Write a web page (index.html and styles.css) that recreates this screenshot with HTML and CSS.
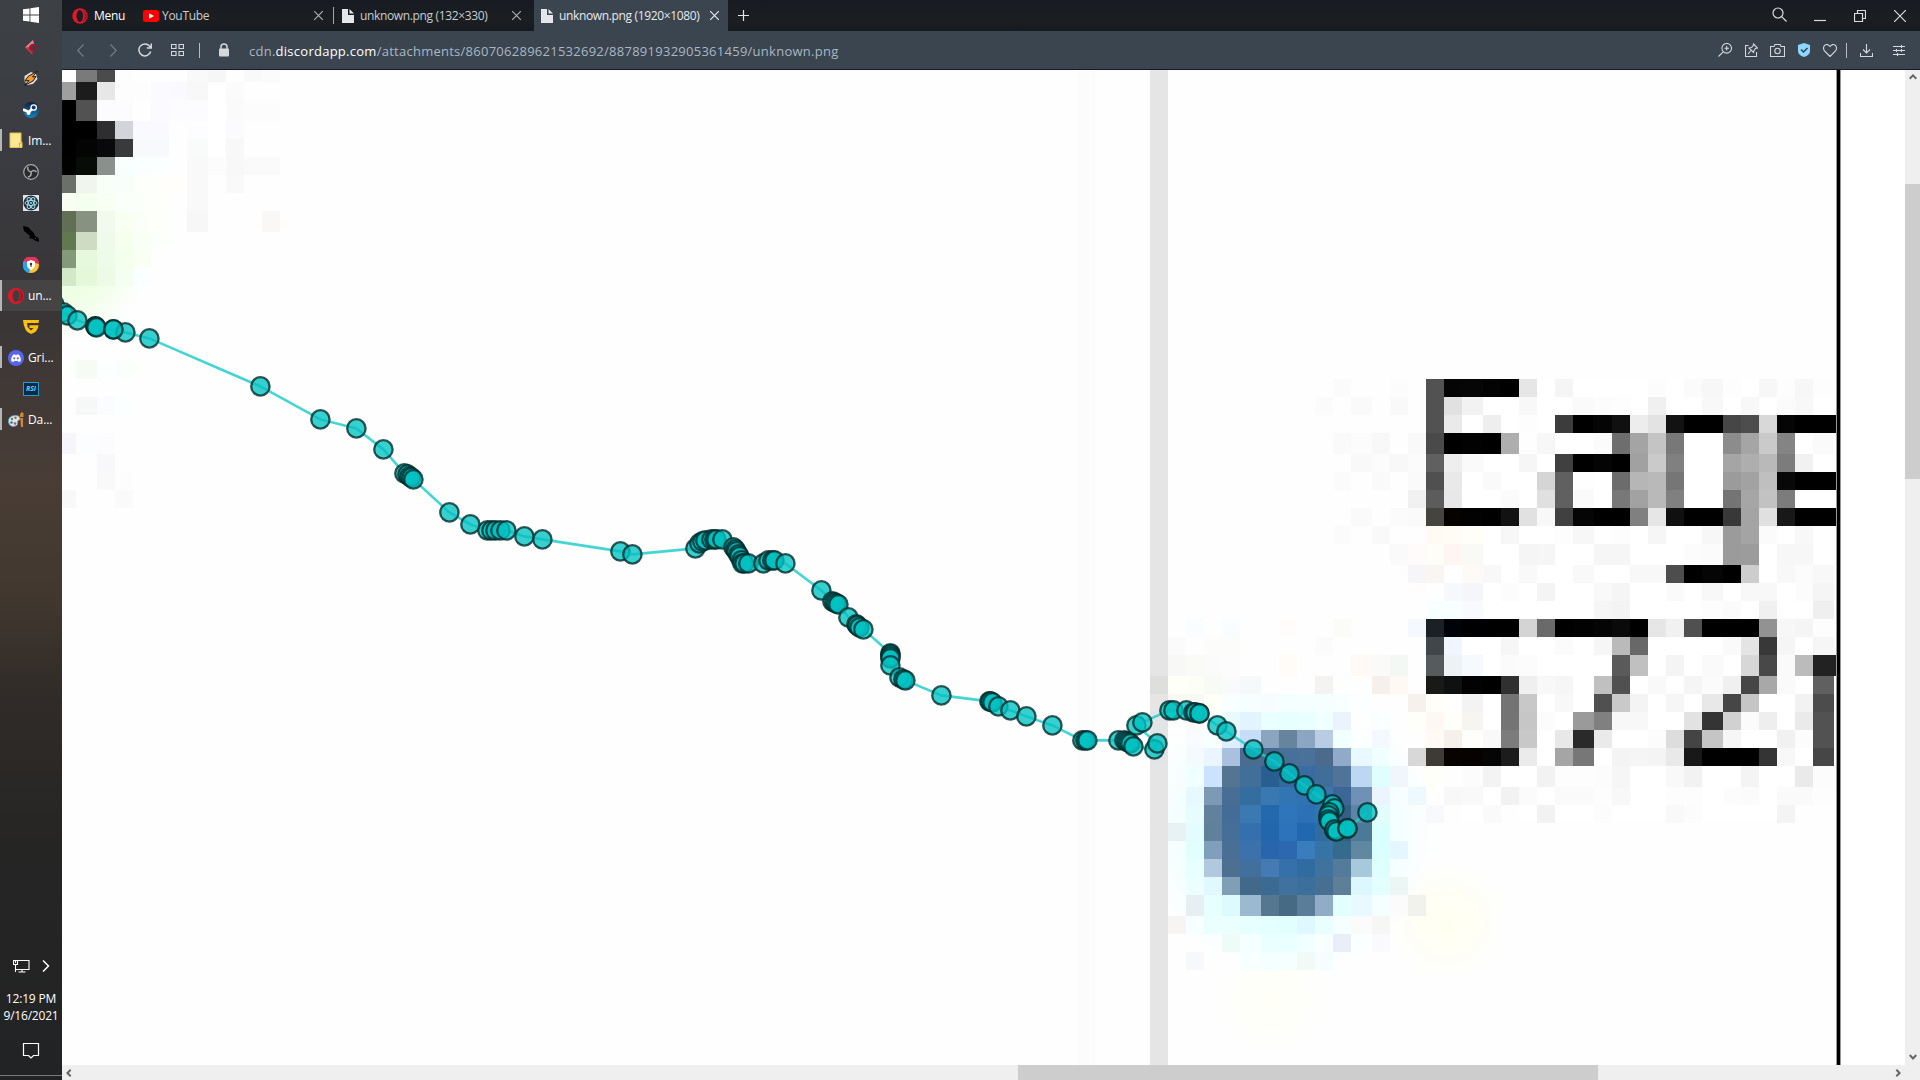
FILE: index.html
```html
<!DOCTYPE html>
<html lang="en">
<head>
<meta charset="utf-8">
<title>unknown.png (1920×1080)</title>
<link rel="stylesheet" href="styles.css">
</head>
<body>
<aside class="taskbar">
  <div class="task start"><svg width="16" height="16" viewBox="0 0 16 16" fill="#fff"><path d="M0 2.3 6.5 1.4V7.6H0zM7.4 1.2 16 0V7.6H7.4zM0 8.4H6.5V14.6L0 13.7zM7.4 8.4H16V16L7.4 14.8z"/></svg></div>
  <div class="task"><svg width="16" height="16" viewBox="0 0 16 16"><path d="M10 0 2 7.5 9.500 15V11L7 7.500 11 4z" fill="#c4354d"/><path d="M10 0 2 7.500 7 7 11 4z" fill="#d98996"/><path d="M12 5.500A3 3 0 1 0 12 10" fill="none" stroke="#a8142f" stroke-width="1.800"/><circle cx="14" cy="7.500" r="1.200" fill="#a8142f"/></svg></div>
  <div class="task"><svg width="16" height="16" viewBox="0 0 16 16"><path d="M1.500 5 8 1 13 3 14.500 8 10 13 4 14 1.500 10z" fill="#ddd"/><path d="M14.500 0 5 5.500 2 10 6 9.500 1.500 14.500 10 10 13 5.500 9.500 6z" fill="#f79a26" stroke="#1b1b1b" stroke-width="1"/></svg></div>
  <div class="task"><svg width="16" height="16" viewBox="0 0 16 16"><defs><linearGradient id="steam" x2="0" y2="1"><stop stop-color="#141c3c"/><stop offset="1" stop-color="#1684c0"/></linearGradient></defs><circle cx="8" cy="8" r="8" fill="url(#steam)"/><path d="M0 7.500 6 10 10 6" fill="none" stroke="#fff" stroke-width="2.600"/><circle cx="10.700" cy="5.500" r="2.700" fill="#1c3a66" stroke="#fff" stroke-width="1.300"/><circle cx="5.500" cy="11" r="2" fill="#fff"/></svg></div>
  <div class="task open"><svg width="14" height="17" viewBox="0 0 14 17"><path d="M1 1H12V10H13V15.500H1z" fill="#ffe794" stroke="#e8c255"/><path d="M10.500 15.500V11H13" fill="none" stroke="#d9a92a"/></svg><span>Im...</span></div>
  <div class="task"><svg width="16" height="16" viewBox="0 0 16 16"><circle cx="8" cy="8" r="7.300" fill="#29282c" stroke="#a9a9ab" stroke-width="1.200"/><path d="M8 8Q4 7 5 3M8 8Q11 5 13.500 8M8 8Q9 12 5 13" fill="none" stroke="#a9a9ab" stroke-width="1.500"/></svg></div>
  <div class="task"><svg width="16" height="16" viewBox="0 0 16 16"><rect width="16" height="16" fill="#dfe3e5"/><circle cx="8" cy="8" r="7.600" fill="#27313c"/><g fill="none" stroke="#9ddcea" stroke-width="1"><ellipse cx="8" cy="8" rx="6" ry="2.500"/><ellipse cx="8" cy="8" rx="6" ry="2.500" transform="rotate(60 8 8)"/><ellipse cx="8" cy="8" rx="6" ry="2.500" transform="rotate(120 8 8)"/></g><circle cx="8" cy="8" r="1" fill="#9ddcea"/></svg></div>
  <div class="task"><svg width="16" height="16" viewBox="0 0 16 16"><path d="M0 0 5 1 11 7 12 10 15.500 12 16 16 12 14.500 10 13 6 12 7 10 1 5z" fill="#000"/><path d="M12 12 13 13" stroke="#555"/></svg></div>
  <div class="task"><svg width="16" height="16" viewBox="0 0 16 16"><circle cx="8" cy="8" r="8" fill="#fcc332"/><path d="M8 8 .5 4A8 8 0 0 1 16 7L8 5z" fill="#e6315c"/><path d="M8 8 1 4A8 8 0 0 0 6 16z" fill="#23a5ee"/><path d="M8 3 12 4.500V8Q12 11 8 13 4 11 4 8V4.500z" fill="#fff"/><circle cx="8" cy="7" r="1.200" fill="#333"/><path d="M8 7V10" stroke="#333"/></svg></div>
  <div class="task open active"><svg width="16" height="16" viewBox="0 0 16 16"><circle cx="8" cy="8" r="8" fill="#e0182d"/><ellipse cx="8" cy="8" rx="3.500" ry="6" fill="#403d3d"/><path d="M10 2A8 6.500 0 0 1 10 14 8 8 0 0 0 10 2" fill="#a60f20"/></svg><span>un...</span></div>
  <div class="task"><svg width="16" height="14" viewBox="0 0 16 14"><path d="M0 0H16L15.500 3H4L4.600 7 8 10.500 10.500 8H6.500V5.200H15.500Q15 12 8 14 1 12 0 0z" fill="#fdc010"/></svg></div>
  <div class="task open"><svg width="16" height="16" viewBox="0 0 16 16"><circle cx="8" cy="8" r="8" fill="#5865f2"/><path d="M3.200 11.200Q3 7 5 4.700L7 4.200 7.400 5H8.600L9 4.200 11 4.700Q13 7 12.800 11.200L10.500 12 9.800 11H6.200L5.500 12z" fill="#fff"/><circle cx="6.200" cy="8.300" r="1.100" fill="#5865f2"/><circle cx="9.800" cy="8.300" r="1.100" fill="#5865f2"/></svg><span>Gri...</span></div>
  <div class="task"><div class="rsi">RSI</div></div>
  <div class="task open"><svg width="16" height="16" viewBox="0 0 16 16"><path d="M.5 10Q0 4 7 3.500 12 3 12 7.500 9 8 9.500 11 10 14 5 14.500 1 14 .5 10z" fill="#d5e8ef" stroke="#6ba6bd" stroke-width=".8"/><circle cx="4" cy="7" r="1.200" fill="#3f9e45"/><circle cx="7.500" cy="5.700" r="1.200" fill="#e0452f"/><circle cx="3.500" cy="10.500" r="1.300" fill="#2b6fd3"/><circle cx="7" cy="11.500" r="1.300" fill="#e0452f"/><path d="M12 2.500 13.500 0 15.500 1V5H12zM12.300 6H15V15H13z" fill="#d88728"/></svg><span>Da...</span></div>
  <div class="tray">
    <svg width="17" height="14" viewBox="0 0 17 14" fill="none" stroke="#fff" stroke-width="1.100"><path d="M5 1.500H16V10.500H3M9 10.500V13M5.500 13H12.500M.5 1.500H4.500V5.500H.5zM2.500 5V13M2.500 1V4"/></svg>
    <svg width="8" height="12" viewBox="0 0 8 12" fill="none" stroke="#fff" stroke-width="1.500"><path d="M1 .5 6.500 6 1 11.500"/></svg>
  </div>
  <div class="clock"><span class="time">12:19 PM</span><span class="date">9/16/2021</span></div>
  <svg class="note" width="18" height="18" viewBox="0 0 18 18" fill="none" stroke="#fff" stroke-width="1.200"><path d="M1.500 1.500H16.500V13.500H11.500L9 16 6.500 13.500H1.500z"/></svg>
  <div class="desk"></div>
</aside>
<main class="browser">
  <header class="tabs">
    <div class="menu"><svg width="16" height="16" viewBox="0 0 16 16"><circle cx="8" cy="8" r="7.700" fill="#e3172d"/><ellipse cx="7.800" cy="8" rx="3.300" ry="6" fill="#1a1e22"/><path d="M10 2A8 6.500 0 0 1 10 14 8 8 0 0 0 10 2" fill="#a80f20"/></svg><span>Menu</span></div>
    <div class="tab yt"><svg width="16" height="12" viewBox="0 0 16 12"><rect width="16" height="12" rx="2.500" fill="#f00"/><path d="M6 3.200 11 6 6 8.800z" fill="#fff"/></svg><span>YouTube</span><svg class="x" width="9" height="9" viewBox="0 0 9 9"><path d="M0 0 9 9M9 0 0 9"/></svg></div>
    <div class="tab mid"><svg width="12" height="14" viewBox="0 0 12 14"><path d="M0 0H6V6H12V14H0zM7.500 0 12 4.500H7.500z" fill="#e3e6ea"/></svg><span>unknown.png (132×330)</span><svg class="x" width="9" height="9" viewBox="0 0 9 9"><path d="M0 0 9 9M9 0 0 9"/></svg></div>
    <div class="tab current"><svg width="12" height="14" viewBox="0 0 12 14"><path d="M0 0H6V6H12V14H0zM7.500 0 12 4.500H7.500z" fill="#e3e6ea"/></svg><span>unknown.png (1920×1080)</span><svg class="x" width="9" height="9" viewBox="0 0 9 9"><path d="M0 0 9 9M9 0 0 9"/></svg></div>
    <svg class="plus" width="11" height="11" viewBox="0 0 11 11"><path d="M5.500 0V11M0 5.500H11" stroke="#e3e6e9" stroke-width="1.200"/></svg>
    <div class="window">
      <svg width="15" height="15" viewBox="0 0 15 15"><circle cx="6" cy="6" r="5"/><path d="M9.700 9.700 14.500 14.500"/></svg>
      <svg width="12" height="15" viewBox="0 0 12 15"><path d="M0 13.500H12"/></svg>
      <svg width="12" height="12" viewBox="0 0 12 12"><path d="M.5 3.500H8.500V11.500H.5zM3.500 3V.5H11.500V8.500H9"/></svg>
      <svg width="12" height="12" viewBox="0 0 12 12"><path d="M0 0 12 12M12 0 0 12"/></svg>
    </div>
  </header>
  <nav class="address">
    <svg class="dim" width="7" height="13" viewBox="0 0 7 13"><path d="M6.500.5.7 6.500 6.500 12.500"/></svg>
    <svg class="dim fwd" width="7" height="13" viewBox="0 0 7 13"><path d="M.5.5 6.300 6.500.5 12.500"/></svg>
    <svg class="reload" width="14" height="14" viewBox="0 0 14 14" stroke-width="1.500"><path d="M12.700 8.500A6 6 0 1 1 11.500 3L13 5M13.300 .5V5H8.800"/></svg>
    <svg class="grid" width="13" height="12" viewBox="0 0 13 12"><path d="M.5.5H5V4.500H.5zM8 .5H12.500V4.500H8zM.5 7.500H5V11.500H.5zM8 7.500H12.500V11.500H8z"/></svg>
    <i class="sep"></i>
    <svg class="lock" width="10" height="14" viewBox="0 0 10 14"><path d="M2 6V4A3 3 0 0 1 8 4V6" stroke-width="1.500"/><rect y="5.500" width="10" height="8" rx="1" fill="#d4d8dc" stroke="none"/></svg>
    <div class="url">cdn.<b>discordapp.com</b>/attachments/860706289621532692/887891932905361459/unknown.png</div>
    <div class="tools">
      <svg width="14" height="14" viewBox="0 0 14 14"><circle cx="8.700" cy="5.300" r="4.800"/><path d="M5.200 8.800.5 13.500M8.700 3V7.600M6.400 5.300H11"/></svg>
      <svg width="13" height="14" viewBox="0 0 13 14"><path d="M3.500 2.500H.5V13.500H11.500V9M3 11 6 7.500M8.500 1 12.500 5 10.500 5.500 9 7.500 8.500 9.500 4 5 6.500 4.500 8.200 2.800z"/></svg>
      <svg width="15" height="13" viewBox="0 0 15 13"><path d="M.5 2.500H4L5 .5H10L11 2.500H14.500V12.500H.5z"/><circle cx="7.500" cy="7" r="2.700"/></svg>
      <svg width="12" height="14" viewBox="0 0 12 14"><path d="M6 0 12 2V8Q12 12 6 14 0 12 0 8V2z" fill="#8fd6ff" stroke="none"/><path d="M3 6.500 5.500 9 9.500 5" stroke="#26445c" stroke-width="1.500"/></svg>
      <svg width="14" height="13" viewBox="0 0 14 13"><path d="M7 12.500 1.500 7Q-.5 4 1.500 1.500 4.500-.8 7 2.500 9.500-.8 12.500 1.500 14.500 4 12.500 7z"/></svg>
      <i class="sep"></i>
      <svg width="13" height="13" viewBox="0 0 13 13"><path d="M6.500 0V8.500M3 5.500 6.500 9 10 5.500M.5 9V12.500H12.500V9"/></svg>
      <svg width="12" height="11" viewBox="0 0 12 11"><path d="M0 1.500H12M0 5.500H12M0 9.500H12M8.500 0V3M3.500 4V7M8.500 4V7M4.500 8V11"/></svg>
    </div>
  </nav>
  <section class="viewer">
    <svg id="map" width="1843" height="995" viewBox="62 70 1843 995"></svg>
    <div class="vbar"><svg width="8" height="6" viewBox="0 0 8 6"><path d="M.7 4.700 4 1.400 7.300 4.700"/></svg><div class="vthumb"></div><svg width="8" height="6" viewBox="0 0 8 6"><path d="M.7 1 4 4.500 7.300 1"/></svg></div>
    <div class="hbar"><svg width="6" height="8" viewBox="0 0 6 8"><path d="M4.700.7 1.400 4 4.700 7.300"/></svg><div class="hthumb"></div><svg width="6" height="8" viewBox="0 0 6 8"><path d="M1.300.7 4.600 4 1.300 7.300"/></svg></div>
    <div class="corner"></div>
  </section>
</main>
<script src="map.js"></script>
</body>
</html>
```
FILE: styles.css
```css
* { box-sizing: border-box; }
body { margin: 0; width: 1920px; height: 1080px; overflow: hidden; display: flex; font-family: "Open Sans", "Noto Sans", sans-serif; font-size: 12px; color: #fff; background: #fff; }
svg { display: block; flex: none; }
span, .url { white-space: nowrap; }
.taskbar { width: 62px; height: 1080px; flex: none; display: flex; flex-direction: column; background: linear-gradient(#3d4146 0, #3a3b40 180px, #383536 300px, #493d36 480px, #42382f 590px, #302b28 700px, #252524 850px, #222324 1080px); }
.task { height: 31px; flex: none; display: flex; align-items: center; justify-content: center; }
.start { height: 32px; padding-bottom: 2px; }
.open { justify-content: flex-start; padding-left: 8px; gap: 4px; position: relative; }
.open svg { width: 16px; }
.open span { width: 30px; font-size: 12px; letter-spacing: -.1px; }
.open::before { content: ""; position: absolute; left: 0; top: 4px; width: 2px; height: 22px; background: #b5b5b5; }
.active { background: #454343; }
.active::before { top: 0; height: 31px; }
.rsi { width: 16px; height: 14px; border: 1px solid #2b98c9; background: #082c44; color: #65c9f5; font: italic bold 7px/12px "Open Sans", sans-serif; text-align: center; }
.tray { display: flex; margin-top: auto; align-items: center; padding-left: 13px; gap: 12px; height: 14px; }
.clock { margin-top: 17px; height: 40px; display: flex; flex-direction: column; align-items: center; line-height: 17px; }
.note { margin: 12px 0 0 22px; }
.desk { height: 5px; margin-top: 15px; border-top: 1px solid #77797a; }
.time { letter-spacing: -.15px; }
.date { letter-spacing: -.2px; }
.browser { width: 1858px; display: flex; flex-direction: column; }
.tabs { height: 31px; flex: none; display: flex; align-items: center; background: linear-gradient(#171b21, #1b1f22 60%, #171b1f); }
.menu { width: 80px; display: flex; align-items: center; padding-left: 10px; gap: 6px; letter-spacing: -.3px; }
.tab { height: 31px; display: flex; align-items: center; color: #c8ccd0; letter-spacing: -.35px; }
.tab .x { margin-left: auto; fill: none; stroke: #a9adb0; stroke-width: 1.200; }
.yt { width: 191px; padding: 0 10px 0 1px; gap: 3px; letter-spacing: -.3px; }
.mid { width: 201px; padding: 0 13px 0 9px; gap: 6px; position: relative; }
.mid::before { content: ""; position: absolute; left: 0; top: 7px; width: 1px; height: 17px; background: #a4a7aa; }
.current { width: 194px; padding: 0 9px 0 7px; gap: 6px; background: #3b4550; color: #e6e9ec; }
.current .x { stroke: #e2e6e9; }
.plus { margin-left: 10px; }
.window { margin-left: auto; display: flex; align-items: center; padding-right: 14px; fill: none; stroke: #d9dcdf; stroke-width: 1.200; }
.window svg:nth-child(1) { margin-right: 27px; transform: translateY(-1px); }
.window svg:nth-child(2) { margin: 0 28px 0 0; transform: translateY(-1px); align-self: flex-end; }
.window svg:nth-child(3) { margin-right: 28px; }
.address { height: 39px; flex: none; display: flex; align-items: center; background: #3b4550; border-bottom: 1px solid #171b20; padding-left: 15px; fill: none; stroke: #d4d8dc; stroke-width: 1.100; }
.dim { stroke: #75818b; }
.fwd { margin-left: 26px; }
.reload { margin-left: 21px; }
.grid { margin-left: 19px; }
.sep { width: 1px; height: 15px; background: #b7bdc2; }
.address > .sep { margin-left: 15px; }
.lock { margin-left: 19px; }
.url { margin-left: 20px; padding-top: 2px; font-size: 13px; color: #a9b7c3; letter-spacing: .26px; }
.url b { font-weight: 400; color: #fff; }
.tools { display: flex; align-items: center; margin-left: auto; padding-right: 15px; }
.tools > :nth-child(1) { margin-right: 13px; }
.tools > :nth-child(2) { margin-right: 12px; }
.tools > :nth-child(3) { margin-right: 13px; }
.tools > :nth-child(4) { margin-right: 13px; }
.tools > :nth-child(5) { margin-right: 9px; }
.tools > :nth-child(6) { margin-right: 13px; }
.tools > :nth-child(7) { margin-right: 20px; }
.viewer { display: grid; grid-template: 995px 15px / 1843px 15px; background: #fff; }
.vbar, .hbar { background: #efefef; display: flex; align-items: center; fill: none; stroke: #666; stroke-width: 2; }
.vbar { flex-direction: column; padding: 4px 0 5px; }
.vthumb { width: 15px; height: 295px; background: #cdcdcd; margin: 104px 0 auto; }
.hbar { padding: 0 4px; }
.hthumb { width: 580px; height: 15px; background: #cdcdcd; margin: 0 auto 0 946px; }
.corner { background: #efefef; }
```
FILE: map.js
```js
const NS = 'http://www.w3.org/2000/svg';
const map = document.getElementById('map');
function add(tag, attrs) {
  const el = document.createElementNS(NS, tag);
  for (const k in attrs) el.setAttribute(k, attrs[k]);
  map.appendChild(el);
  return el;
}
function rect(x, y, x2, y2, fill) {
  add('rect', { x, y, width: x2 - x, height: y2 - y, fill, 'shape-rendering': 'crispEdges' });
}
function glow(id, cx, cy, r, color) {
  const g = add('radialGradient', { id });
  g.innerHTML = `<stop offset="0" stop-color="${color}"/><stop offset=".5" stop-color="${color}" stop-opacity=".6"/><stop offset="1" stop-color="${color}" stop-opacity="0"/>`;
  add('circle', { cx, cy, r, fill: `url(#${id})` });
}
const XS = [62,76,97,115,133,151,169,187,208,226,244,262,280,1113,1132,1150,1168,1186,1204,1222,1240,1261,1279,1297,1315,1333,1351,1372,1390,1408,1426,1444,1462,1483,1501,1519,1537,1555,1573,1594,1612,1630,1648,1666,1684,1702,1723,1741,1759,1777,1795,1813,1834];
const YS = [70,82,100,121,139,157,175,193,211,232,250,268,286,304,323,343,360,379,397,415,433,454,472,490,508,526,544,565,583,601,619,637,655,676,694,712,730,748,766,787,805,823,841,859,877,895,916,934,952,970];
function row(y, x, cells) {
  let c = XS.indexOf(x);
  const bottom = YS[YS.indexOf(y) + 1];
  for (const t of cells.trim().split(/\s+/)) {
    if (t !== '--') rect(XS[c], y, XS[c + 1], bottom, '#' + (t.length === 2 ? t + t + t : t));
    c++;
  }
}

rect(62, 70, 1905, 1065, '#fefefe');
rect(1843, 70, 1905, 1065, '#ffffff');
glow('green', 66, 262, 80, '#e6ffd8');
glow('cyan', 1288, 830, 145, '#dcffff');
glow('yellow', 1447, 922, 60, '#fffff0');
glow('yellow2', 1272, 1000, 55, '#fffff7');
glow('warm', 1438, 560, 40, '#fff8f4');
rect(1077, 70, 1095, 1065, '#fcfcfc');
rect(1150, 70, 1168, 1065, '#e5e5e6');
rect(1150, 676, 1168, 694, '#dededc');
rect(1150, 712, 1168, 766, '#e2e4e5');

// glyph fragment cut by the left edge
row(70, 62, 'ff 7a 4b fd fe fe fe f9 f6 fe f9 fb');
row(82, 62, '9f 1c e7 fd fd fafaff fafafe f8 ff fb');
row(100, 62, '00 52 fcfcff fcfcff fefeff fafaff fcfcff fcfcff ff fa fc fc');
row(121, 62, '00 00 2e2e31 d3d4d9 f9f9ff f9f9ff fe fdfdff ff fbfbfe');
row(139, 62, '00 04 09090b 393a3c f8f9fa f8f9fc fe f9fafa ff f8');
row(157, 62, '000200 070c06 8a908b f8ffff faffff fbffff fe f9 fc f8 fa fa');
row(175, 62, '6b7168 f0f6ed f8fff8 f8fffa fcfffa fefffa fffefa f9 fe f9');
row(193, 62, 'f8fff2 f5fff0 f8fff3 fafffa fcfffa fefffa fe f9 fe');
row(211, 62, '626f56 889280 f2faee f9fff3 fcfff8 fdfffa fe f7 fe fe fe faf8f6');
row(232, 62, '61794f cedcc4 f0faea f6ffec fafff6 fcfffa');
row(250, 62, '83997a e6f9dc edfce8 f4ffed f9fff3');
row(268, 62, 'd2e8c8 e5f8da edfae5 f4fff2 faffff');
row(360, 76, 'f6fbf3 fcffff fbfffc');
row(397, 76, 'f5f8f6 fafcff fcffff');
row(433, 62, 'f5f5fb fcfdff fcfcff');
row(454, 97, 'f8f8fb');
row(472, 97, 'f9 fd');
row(490, 62, 'f8 fe fe fa');

// first label line
row(379, 1426, '52 05 06 03 00 e6 ff f5 ff ff ff ff fc ff fb f7 fd ff f7 fd f7 fd');
row(397, 1390, 'f9 fe 52 e1 f2 ff ff f8 ff ff fa fc fd ff f0 ff ff f8 ff f8 ff fb f8 ff');
row(415, 1426, '52 ea ff ee ff fd ff 3c 00 05 10 ed e3 12 00 00 46 4d d8 05 00 00');
row(433, 1390, 'f8 f9 4a 00 02 00 ae fe f7 ff ff fb 6e a4 c4 78 ff ff 8c a5 ca 84 ff fa');
row(454, 1390, 'f8 fb 60 ee fa ff ff f6 ff 40 00 04 00 a1 ca 80 ff ff a5 ae b9 7c f1 ff');
row(472, 1408, 'fa 50 e9 ff fa ff ff d5 60 fe ff 6c b6 b9 76 ff ff 9b a2 bf 08 00 00');
row(490, 1408, 'f1 5c e8 ff ff fb ff e0 60 fa ff 78 a2 b9 80 ff ff 74 a6 c2 7c ff ff');
row(508, 1408, 'fa 46443f 050200 02 00 12 e1 f8 40 05 00 00 80 e6 10 00 00 38 a4 e0 18 00 00');
row(526, 1408, 'fe fffaf4 fffbf5 fffef8 ff f7 ff ff fd f7 ff fd ff f6 ff ff f7 9b a4 fb ff f8 ff');
row(544, 1390, 'fa fffbfa fffdf8 fff5f1 f9f9f5 ff ff f5 f6 ff ff f6 f6 ff ff ff fc fb 9b 9c ff f7 f7 ff');
row(565, 1408, 'f6f6f8 f9f5f3 ff fefaf8 f8 ff f9 ff ff f9 ff ff f8 f8 4d 00 05 00 cd ff f8 fc f8');
row(583, 1426, 'fe f7f8fb f5f6f9 ff fc ff f4 ff ff f9 f5 ff ff fa ff f8 ff f8 f8 ff fc f5');

// second label line
row(601, 1426, 'f7ffff f7ffff f8fafd ff ff ff ff ff ff f6 f3 ff ff ff ff fd fb ff f0 ff ff ef');
row(619, 1408, 'f3f9ff 1a2026 000308 000002 00 00 d4 6a 00 02 05 0a 00 e6 f1 50 00 00 00 92 f7 f5 fd');
row(637, 1426, '40464a f0f6ff ff ff f6 ff ff fb ff f6 ba 68 ff ff ff ff fa e4 38 f5 ff f6');
row(655, 1426, '565c5d edf3f5 f6faff ff fb fc ff ff ff ff 5a c0 ff f4 ff fa ff d7 48 fa bb 22');
row(676, 1426, '191a18 0e110f 020202 00 30 ef f8 f6 ff c0 50 ff f9 ff f5 fb f0 46 a8 fa ff 60');
row(694, 1408, 'f6f1ec fffefa ff f3 ff 74 c8 ff f8 ff 50 c9 f4 ff f6 ff e8 46 c5 ff ff f2 4c');
row(712, 1408, 'fffffa fdf8f3 fffffa f6f5f2 ff 74 c6 fc ff 9a 80 f8 f8 ff ff e2 34 d1 fb ee ff ea 52');
row(730, 1426, 'fffaf5 f6f0ea fffefa f9 7c c8 ff e8 2a ea ff ff fc dd 44 c5 f6 ff ff f1 fc 52');
row(748, 1408, 'd8 3e3b37 080300 050200 05 1c eb ff a5 77 ff f4 f5 f4 e9 18 00 00 00 34 f8 ff 46');
row(766, 1426, 'fffffa fe fc f3 ff ff f2 fd fd fc f6 ff ff f9 f2 ff ff f4 ff ff ea fc');
row(787, 1408, 'eef8ff ff f8 f9 ff f2 fb ff fa fa fd f8 ff ff fd fd ff fc fb ff fa fa fd');
row(805, 1426, 'f8f9fc fe ff fa fe ff f2 ff ff fc ff ff ff f9 fc ff ff ff ff f4');
rect(1813, 655, 1838, 676, '#222');
for (const y of [415, 472, 508]) rect(1813, y, 1838, y + 18, '#000');

// faint compression blocks round the labels and the marker
row(379, 1333, 'fb fe fe fc'); row(397, 1315, 'fb fe fa fe');
row(433, 1333, 'fa fc f8 fe'); row(454, 1351, 'f9 fc'); row(472, 1333, 'fb fe fa');
row(508, 1351, 'fa fe fb'); row(526, 1333, 'fb fe f9 fe');
row(619, 1186, 'fafdff fe f9fdff fe fe fffcfa fe fe fbfbf8');
row(637, 1168, 'fbfbfb fe fcfcfa fcfcfa fe fe fe fe fbfbfb');
row(655, 1168, 'f8f9f6 fafbf7 fb fc fe fe fffcf8 fe fe fe fffaf6 fafaf8 f4f8f5');
row(676, 1168, 'fefff7 fdfff6 f7faf5 fa f6f9f9 fe fe fe f4f3f1 fe fe f5f0ec fff9f3');
row(694, 1168, 'f8f8f6 f9f8f5 fefff8 f9ffff f6ffff f6fcff f4ffff f5ffff f6ffff f8ffff fcffff');
row(712, 1168, 'ff fafaf8 f8ffff e8fafe e2f4ff eaffff e8ffff eaffff f0ffff ebf3ff fdffff faffff');
row(730, 1186, 'f8fcff f8ffff ddeeff c6ddf7 8ba5c1 67849f 8ba5c2 b8cce4 f2ffff fbffff f4f9ff');
row(748, 1186, 'f5faff eaf5ff a9c0df 4a6c90 446c93 47719a 49719a 4b6a8c 91aac9 e8faff f0ffff');
row(766, 1186, 'f0ffff cbe3ff 53758f 40709a 285e90 34689e 3a6ba1 416e98 50739a bdd7f3 dfffff f1f6fd');
row(787, 1186, 'e8f8ff 7d9ab5 486f93 346d9f 3979b0 3175b2 3172b1 3c75ad 3b6695 6f91b5 ecf5ff');
row(805, 1186, 'e6fcff 60829c 436d96 3b79b3 2469ab 2f75bb 2c71b3 3274ae 355f85 5b86a5 e3fdff');
row(823, 1168, 'e8f2f5 e3fcff 5f8199 456f98 3570ae 2266ac 2d73bb 2168b0 306d9f 33617a 4b7a98 daffff');
row(841, 1186, 'e2ffff 7f9fba 4a6f95 3c72ab 2865ad 2b68b0 3a7dbc 3674a5 356c8e 6088a0 daffff e4f7ff');
row(859, 1186, 'e8ffff b2c8df 4d7090 41709e 467ab2 3670aa 306ca0 3f729c 547b9a a8c8dc dfffff');
row(877, 1186, 'ecffff e0f8ff 809eb5 43698a 3b6b93 41719f 3c6f9b 476f91 5d7f97 dcf7ff e4ffff ecf6f5');
row(895, 1186, 'e6f0f2 e8ffff dcfaff 9bb9cf 55778f 476a84 5a7d99 90acc6 e3ffff e8faff f5ffff fb f1f2ec');
row(916, 1168, 'f6f5f4 f8ffff ecffff ecffff e6ffff e3ffff e2ffff dff8ff e9ffff f5ffff fb f6f6f4');
row(934, 1222, 'eefcf8 f4ffff eaffff eaffff f0ffff f7ffff e9eef8 fbffff faf9fc');
row(952, 1186, 'f7f8fb fe fe f8ffff f4ffff f6ffff f2faf8 f6fdff');

add('path', { d: 'M1838.500 70V1065', stroke: '#999', 'stroke-width': 5 });
add('path', { d: 'M1838.500 70V1065', stroke: '#000', 'stroke-width': 3 });

const track = [[54,304],[63,312],[67,315],[77,320],[95,326],[95,326],[96,327],[113,329],[125,332],[113,329],[149,338],[260,386],[320,419],[356,428],[383,449],[404,473],[407,474],[409,476],[411,477],[413,479],[449,512],[470,524],[487,530],[491,530],[495,530],[500,530],[506,530],[524,536],[542,539],[620,551],[632,554],[695,548],[699,543],[702,541],[705,540],[711,539],[714,539],[716,539],[722,539],[733,547],[735,549],[736,551],[738,554],[739,556],[741,560],[742,563],[744,563],[748,563],[763,563],[768,560],[772,560],[774,560],[785,563],[821,590],[832,601],[834,602],[836,603],[838,604],[848,617],[856,624],[857,625],[859,627],[863,629],[890,653],[890,654],[890,656],[890,658],[890,665],[899,677],[903,679],[905,680],[941,695],[989,701],[990,701],[992,702],[998,706],[1010,710],[1026,716],[1052,725],[1082,740],[1085,740],[1087,740],[1118,740],[1124,740],[1126,741],[1128,742],[1130,743],[1133,746],[1154,749],[1157,743],[1136,725],[1142,722],[1169,710],[1173,710],[1186,710],[1193,712],[1195,712],[1199,713],[1199,713],[1217,725],[1226,731],[1253,749],[1274,761],[1289,773],[1304,785],[1316,794],[1332,804],[1334,808],[1329,812],[1328,815],[1328,819],[1329,821],[1334,830],[1334,829],[1336,831],[1347,828],[1347,828],[1367,812]];
const shown = track.map(([x, y]) => [x + .4, y + .4]);
add('polyline', { points: shown.join(' '), fill: 'none', stroke: '#24cccc', 'stroke-width': 2.600, 'stroke-opacity': .85 });
for (const [cx, cy] of shown) add('circle', { cx, cy, r: 9.200, fill: '#00c2c2', 'fill-opacity': .78, stroke: '#002c2c', 'stroke-width': 2.300, 'stroke-opacity': .8 });
```
